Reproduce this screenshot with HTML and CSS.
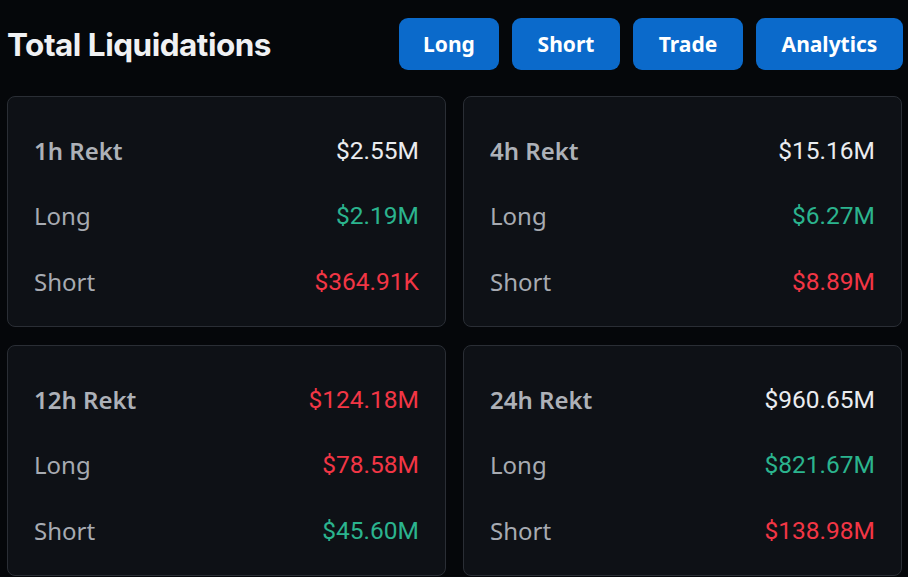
FILE: index.html
```html
<!DOCTYPE html>
<html lang="en">
<head>
<meta charset="utf-8">
<title>Total Liquidations</title>
<link rel="stylesheet" href="styles.css">
</head>
<body>
<div class="page">
  <header class="header">
    <h1 class="title">Total Liquidations</h1>
    <nav class="actions">
      <button class="btn btn-long">Long</button>
      <button class="btn btn-short">Short</button>
      <button class="btn btn-trade">Trade</button>
      <button class="btn btn-analytics">Analytics</button>
    </nav>
  </header>
  <main class="grid">
    <section class="card">
      <div class="row head"><span class="label">1h Rekt</span><span class="value white">$2.55M</span></div>
      <div class="row"><span class="label">Long</span><span class="value green">$2.19M</span></div>
      <div class="row"><span class="label">Short</span><span class="value red">$364.91K</span></div>
    </section>
    <section class="card">
      <div class="row head"><span class="label">4h Rekt</span><span class="value white">$15.16M</span></div>
      <div class="row"><span class="label">Long</span><span class="value green">$6.27M</span></div>
      <div class="row"><span class="label">Short</span><span class="value red">$8.89M</span></div>
    </section>
    <section class="card">
      <div class="row head"><span class="label">12h Rekt</span><span class="value red">$124.18M</span></div>
      <div class="row"><span class="label">Long</span><span class="value red">$78.58M</span></div>
      <div class="row"><span class="label">Short</span><span class="value green">$45.60M</span></div>
    </section>
    <section class="card">
      <div class="row head"><span class="label">24h Rekt</span><span class="value white">$960.65M</span></div>
      <div class="row"><span class="label">Long</span><span class="value green">$821.67M</span></div>
      <div class="row"><span class="label">Short</span><span class="value red">$138.98M</span></div>
    </section>
  </main>
</div>
</body>
</html>
```
FILE: styles.css
```css
html, body {
  margin: 0;
  padding: 0;
  background: #05070a;
}
body {
  font-family: "Noto Sans", "Open Sans", sans-serif;
  color: #eaecef;
  width: 908px;
  height: 577px;
  overflow: hidden;
}
.page {
  display: flex;
  flex-direction: column;
}
.header {
  display: flex;
  align-items: center;
  justify-content: space-between;
  padding: 18px 5px 0 7px;
  height: 52px;
}
.title {
  margin: 0;
  font-family: Inter, "Noto Sans", sans-serif;
  font-weight: 700;
  font-size: 31.5px;
  letter-spacing: -0.5px;
  color: #f0f1f3;
}
.actions {
  display: flex;
  gap: 13px;
}
.btn {
  height: 52px;
  border: none;
  border-radius: 9px;
  background: #0b6acb;
  color: #ffffff;
  font-family: "Noto Sans", sans-serif;
  font-weight: 700;
  font-size: 21px;
  padding: 0;
  cursor: pointer;
}
.btn-long { width: 100px; }
.btn-short { width: 108px; }
.btn-trade { width: 110px; }
.btn-analytics { width: 147px; }
.grid {
  display: grid;
  grid-template-columns: 439px 439px;
  grid-template-rows: 231px 231px;
  column-gap: 17px;
  row-gap: 18px;
  padding: 26px 6px 0 7px;
}
.card {
  box-sizing: border-box;
  background: #0e1116;
  border: 1.5px solid #2a2e35;
  border-radius: 8px;
  padding: 38px 26px 0 26px;
  display: flex;
  flex-direction: column;
  gap: 35.5px;
}
.row {
  display: flex;
  justify-content: space-between;
  align-items: center;
  height: 30px;
  font-size: 24px;
}
.label {
  color: #a7abb2;
  font-weight: 400;
}
.head .label {
  font-weight: 600;
  color: #adb1b8;
}
.value {
  font-family: Roboto, "Noto Sans", sans-serif;
  font-weight: 400;
  font-size: 24.5px;
}
.white { color: #eaecef; }
.green { color: #2bb48e; }
.red { color: #f23645; }
```
